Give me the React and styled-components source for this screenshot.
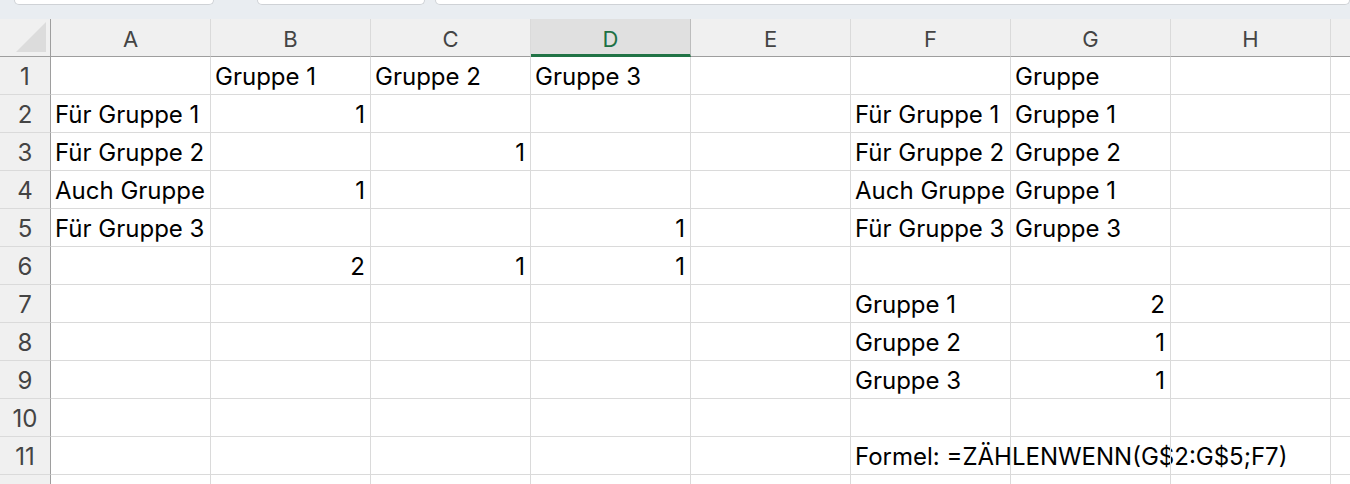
import React from 'react';
import styled, { createGlobalStyle } from 'styled-components';

const GlobalStyle = createGlobalStyle`
  html, body {
    margin: 0;
    padding: 0;
    background: #ffffff;
    overflow: hidden;
  }
  body {
    font-family: 'Inter', 'Liberation Sans', sans-serif;
  }
`;

const COLUMNS = ['A', 'B', 'C', 'D', 'E', 'F', 'G', 'H', ''];
const SELECTED_COL = 'D';

// each row: values for A..H (string = left text, number = right aligned)
const ROWS = [
  ['', 'Gruppe 1', 'Gruppe 2', 'Gruppe 3', '', '', 'Gruppe', ''],
  ['Für Gruppe 1', 1, '', '', '', 'Für Gruppe 1', 'Gruppe 1', ''],
  ['Für Gruppe 2', '', 1, '', '', 'Für Gruppe 2', 'Gruppe 2', ''],
  ['Auch Gruppe', 1, '', '', '', 'Auch Gruppe', 'Gruppe 1', ''],
  ['Für Gruppe 3', '', '', 1, '', 'Für Gruppe 3', 'Gruppe 3', ''],
  ['', 2, 1, 1, '', '', '', ''],
  ['', '', '', '', '', 'Gruppe 1', 2, ''],
  ['', '', '', '', '', 'Gruppe 2', 1, ''],
  ['', '', '', '', '', 'Gruppe 3', 1, ''],
  ['', '', '', '', '', '', '', ''],
  ['', '', '', '', '', 'Formel: =ZÄHLENWENN(G$2:G$5;F7)', '', ''],
];

function App() {
  return (
    <>
      <GlobalStyle />
      <Window>
        <TabStrip>
          <WindowTab width="200px" />
          <WindowTab width="168px" />
          <WindowTab grow />
        </TabStrip>
        <Sheet>
          <Corner>
            <CornerTriangle />
          </Corner>
          {COLUMNS.map((c, i) => (
            <ColHeader key={'h' + i} selected={c === SELECTED_COL}>
              {c}
            </ColHeader>
          ))}
          {ROWS.map((row, r) => (
            <React.Fragment key={r}>
              <RowHeader>{r + 1}</RowHeader>
              {row.map((v, c) => (
                <Cell key={c} numeric={typeof v === 'number'}>
                  {v}
                </Cell>
              ))}
              <Cell />
            </React.Fragment>
          ))}
          {/* row 12, only its top edge is in view */}
          <RowHeader />
          {COLUMNS.map((c, i) => (
            <Cell key={'last' + i} />
          ))}
        </Sheet>
      </Window>
    </>
  );
}

const Window = styled.div`
  width: 1350px;
  height: 484px;
  overflow: hidden;
  background: #ffffff;
`;

const TabStrip = styled.div`
  display: flex;
  align-items: flex-start;
  height: 19px;
  padding-left: 14px;
  background: #e9edf1;
  box-sizing: border-box;

  & > div:nth-child(2) {
    margin-left: 43px;
  }
  & > div:nth-child(3) {
    margin-left: 10px;
  }
`;

const WindowTab = styled.div`
  height: 5px;
  width: ${(p) => (p.grow ? 'auto' : p.width)};
  flex: ${(p) => (p.grow ? '1 1 auto' : '0 0 auto')};
  background: #ffffff;
  border: 1px solid #cfd2d6;
  border-top: none;
  border-radius: 0 0 6px 6px;
  box-sizing: border-box;
`;

const Sheet = styled.div`
  display: grid;
  grid-template-columns: 51px repeat(8, 160px) 20px;
  grid-auto-rows: 38px;
`;

const Corner = styled.div`
  position: relative;
  background: #f0f0f0;
  border-right: 1px solid #9e9e9e;
  border-bottom: 1px solid #9e9e9e;
  box-sizing: border-box;
`;

const CornerTriangle = styled.div`
  position: absolute;
  right: 4px;
  bottom: 4px;
  width: 0;
  height: 0;
  border-left: 30px solid transparent;
  border-bottom: 30px solid #dcdcdc;
`;

const ColHeader = styled.div`
  display: flex;
  align-items: center;
  justify-content: center;
  box-sizing: border-box;
  background: ${(p) => (p.selected ? '#e0e0e0' : '#f0f0f0')};
  color: ${(p) => (p.selected ? '#1e7145' : '#444444')};
  border-right: 1px solid ${(p) => (p.selected ? '#bdbdbd' : '#dadada')};
  border-bottom: ${(p) => (p.selected ? '3px solid #217346' : '1px solid #9e9e9e')};
  padding-top: ${(p) => (p.selected ? '5px' : '3px')};
  font-size: 22px;
  line-height: 1;
`;

const RowHeader = styled.div`
  display: flex;
  align-items: center;
  justify-content: center;
  box-sizing: border-box;
  background: #f0f0f0;
  color: #444444;
  border-right: 1px solid #9e9e9e;
  border-bottom: 1px solid #dadada;
  font-size: 24px;
  line-height: 1;
  padding-top: 3px;
`;

const Cell = styled.div`
  display: flex;
  align-items: flex-end;
  justify-content: ${(p) => (p.numeric ? 'flex-end' : 'flex-start')};
  box-sizing: border-box;
  padding: 0 5px 5px 4px;
  border-right: 1px solid #dadada;
  border-bottom: 1px solid #dadada;
  color: #000000;
  font-size: 24px;
  line-height: 1;
  white-space: nowrap;
  position: relative;
  z-index: 1;
`;

export default App;
